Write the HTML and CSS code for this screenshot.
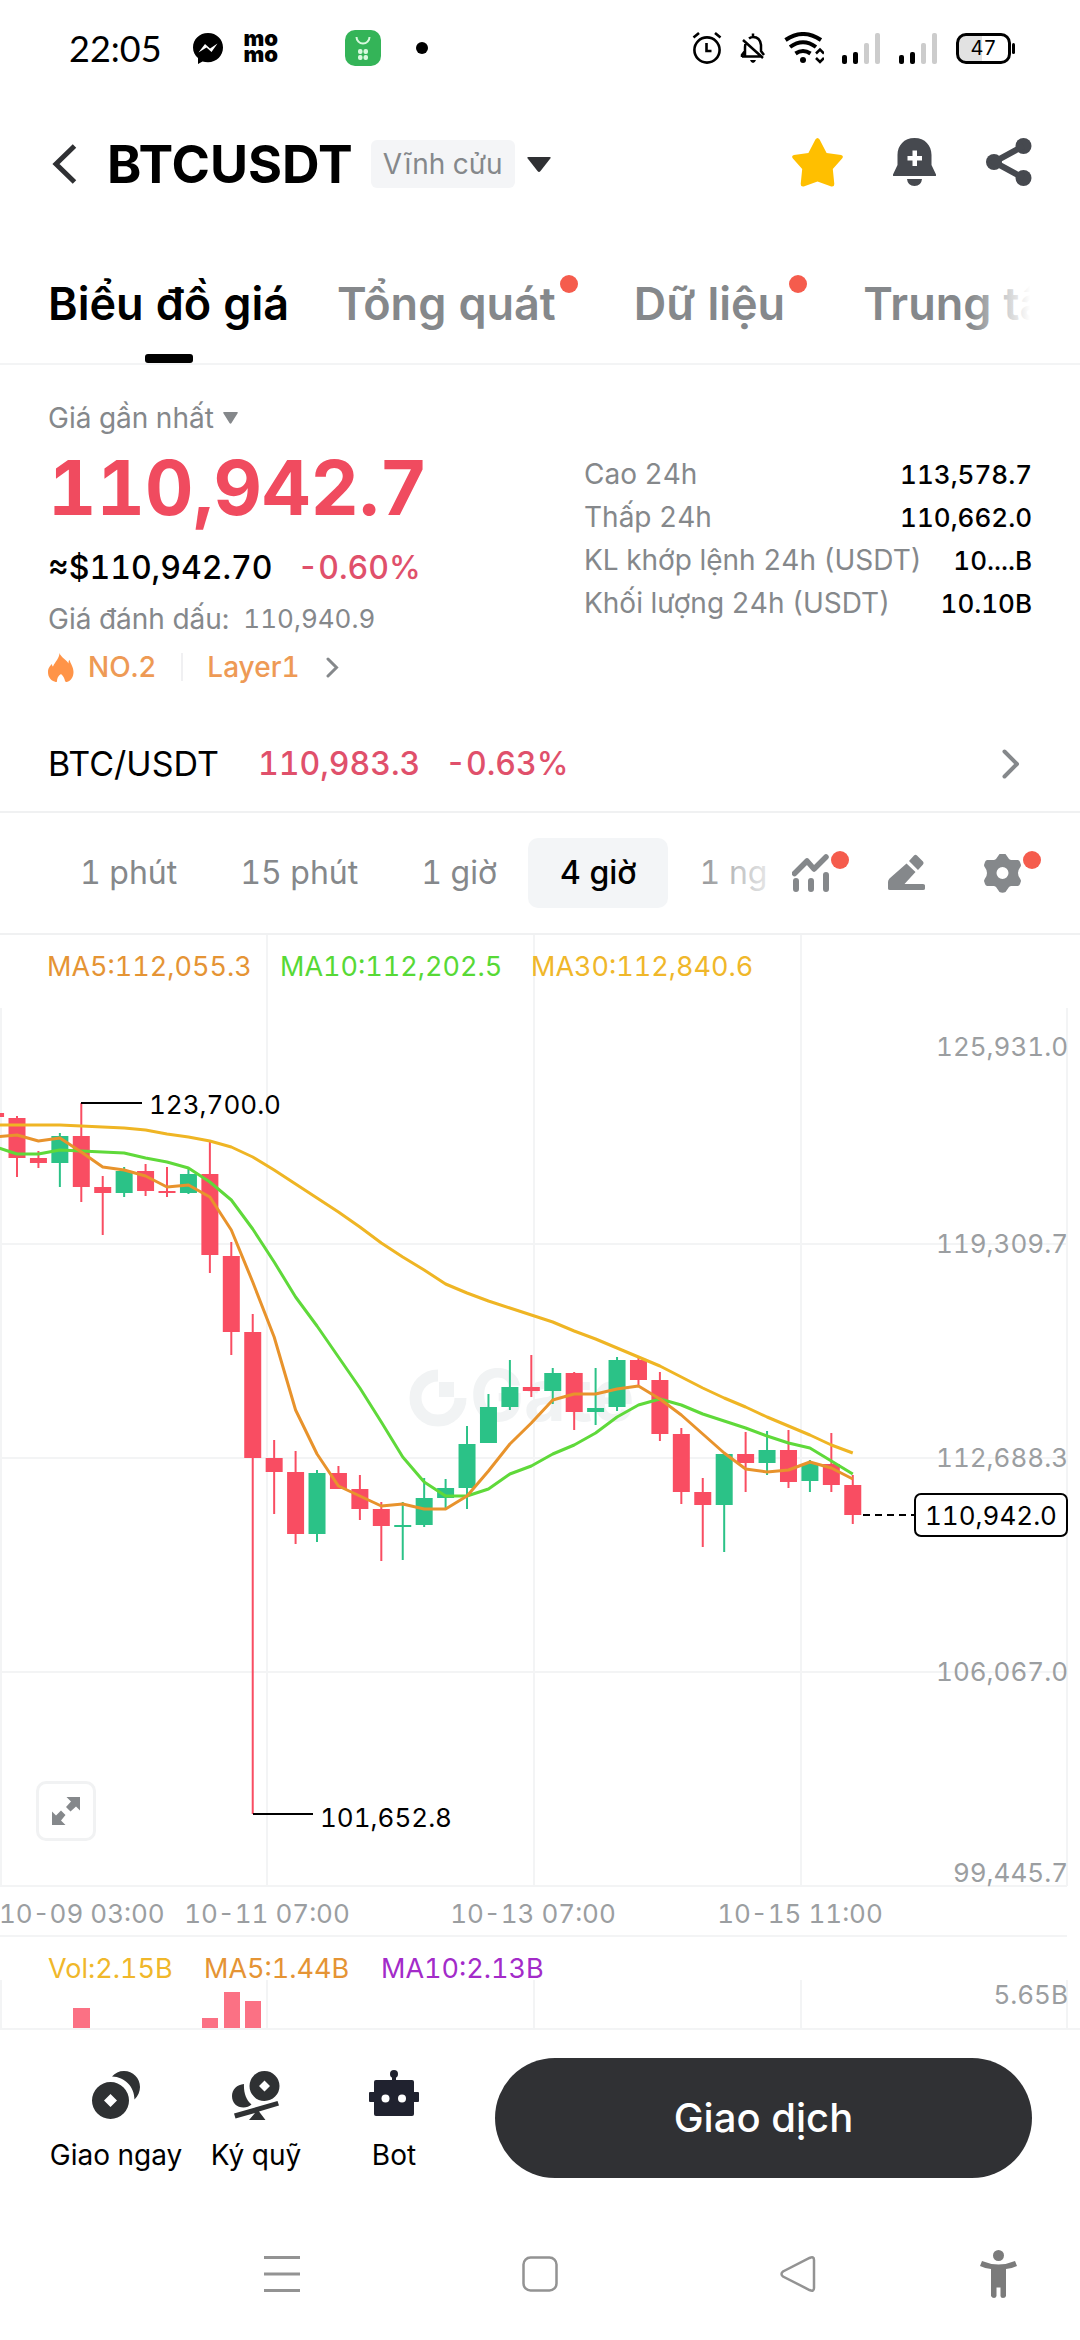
FILE: index.html
```html
<!DOCTYPE html>
<html lang="vi">
<head>
<meta charset="utf-8">
<meta name="viewport" content="width=device-width">
<title>BTCUSDT</title>
<link rel="stylesheet" href="styles.css">
</head>
<body>
<div class="status">
  <span class="clock">22:05</span>
  <svg class="messenger" width="30" height="31" viewBox="0 0 30 31"><path d="M15 0C6.500 0 0 6.300 0 14.500c0 4.600 2 8 5 10.600V31l4.500-2.500c1.700.5 3.500.8 5.500.8 8.500 0 15-6.300 15-14.700S23.500 0 15 0z"/><path d="M5.500 19.500 12 11l5 4.500 7.500-5L18.500 19l-5-4.500z" fill="#fff"/></svg>
  <span class="momo">mo<br>mo</span>
  <svg class="shop" width="36" height="36" viewBox="0 0 36 36"><rect width="36" height="36" rx="10" fill="#34b458"/><path d="M11.500 7a6.500 6.500 0 0 0 13 0" fill="none" stroke="#d9f8df" stroke-width="2"/><g fill="#d9f8df"><rect x="13" y="19" width="4.500" height="5" rx="2"/><rect x="18.500" y="19" width="4.500" height="5" rx="2"/><rect x="13" y="25" width="4.500" height="5" rx="2"/><rect x="18.500" y="25" width="4.500" height="5" rx="2"/></g></svg>
  <span class="more-dot"></span>
  <div class="status-right">
    <svg width="30" height="32" viewBox="0 0 30 32" fill="none" stroke="#000" stroke-width="2.600"><circle cx="15" cy="18" r="12.600"/><path d="M14.500 11v8h5M1.500 5.500 7 1M28.500 5.500 23 1"/></svg>
    <svg width="26" height="32" viewBox="0 0 26 32" fill="none" stroke="#000" stroke-width="2.500"><path d="M2 24.500h19M5 24V15q0-3 1.500-5M9 6.500q2-1.500 4-1.500 7 0 8 8v6l3 4M13 5V1.500M3 8l20 18M5 19l-3 4v2"/><path d="M10 28h6q-1 3-3 3t-3-3z" fill="#000" stroke="none"/></svg>
    <svg width="40" height="32" viewBox="0 0 40 32" fill="none" stroke="#000" stroke-width="4"><path d="M1.500 8Q19-4 37 8M6 15q13-9.500 26 0M11.500 21.500q7.500-5 15 0"/><circle cx="19" cy="28" r="3" fill="#000" stroke="none"/><path d="m32 21.500 4-4 4 4M32 26l4 4 4-4" stroke-width="2.500"/></svg>
    <svg width="39" height="31" viewBox="0 0 39 31"><g><rect y="22" width="5" height="9" rx="2"/><rect x="11" y="19" width="5" height="12" rx="2"/></g><g fill="#ccc"><rect x="22" y="10" width="5" height="21" rx="2"/><rect x="33" width="5" height="31" rx="2"/></g></svg>
    <svg width="39" height="31" viewBox="0 0 39 31"><g><rect y="22" width="5" height="9" rx="2"/><rect x="11" y="19" width="5" height="12" rx="2"/></g><g fill="#ccc"><rect x="22" y="10" width="5" height="21" rx="2"/><rect x="33" width="5" height="31" rx="2"/></g></svg>
    <span class="battery">47</span>
  </div>
</div>

<header class="head">
  <button class="icon-btn back" aria-label="Quay lại"><svg width="26" height="40" viewBox="0 0 26 40"><path d="M22.500 2 4 20l18.500 18" fill="none" stroke="#2f3033" stroke-width="5"/></svg></button>
  <h1>BTCUSDT</h1>
  <button class="badge">Vĩnh cửu</button>
  <svg class="caret" width="24" height="15" viewBox="0 0 24 15"><path d="M1.500 0h21q2 0 .8 1.600L13.500 14q-1.500 1.800-3 0L.7 1.600Q-.5 0 1.500 0z" fill="#2f3033"/></svg>
  <div class="head-actions">
    <button class="icon-btn" aria-label="Yêu thích"><svg width="51" height="49" viewBox="0 0 51 49"><path d="M23.400 1.500q2.100-3 4.200 0l7 13.500 14.500 2q3 .8 1 3.500L40.800 31l1.500 15q0 3-3 2.500L25.500 43.500l-13.800 5q-3 .5-3-2.500l1.500-15L.9 20.500q-2-2.700 1-3.500l14.500-2z" fill="#ffbf00"/></svg></button>
    <button class="icon-btn" aria-label="Thông báo"><svg width="43" height="48" viewBox="0 0 43 48" fill="#46494f"><path d="M21.500 0C11 0 4.500 7.500 4.500 17v10L0 36.500q-.5 1.500 1 1.500h41q1.500 0 1-1.500L38.500 27V17C38.500 7.500 32 0 21.500 0zM14 41h15q-.7 7-7.500 7T14 41z"/><path d="M19.500 12.500h4.500V18h5v4.500h-5V28h-4.500v-5.500h-5V18h5z" fill="#fff"/></svg></button>
    <button class="icon-btn" aria-label="Chia sẻ"><svg width="46" height="48" viewBox="0 0 46 48" fill="#46494f"><circle cx="8" cy="24" r="8"/><circle cx="37.500" cy="8" r="8"/><circle cx="37.500" cy="40" r="8"/><path d="M37.500 8 8 24l29.500 16" fill="none" stroke="#46494f" stroke-width="6"/></svg></button>
  </div>
</header>

<nav class="tabs">
  <button class="tab active">Biểu đồ giá</button>
  <button class="tab dot">Tổng quát</button>
  <button class="tab dot">Dữ liệu</button>
  <button class="tab">Trung tâm</button>
</nav>

<main>
<section class="summary">
  <div class="price-col">
    <button class="last-label">Giá gần nhất <svg width="15" height="12" viewBox="0 0 15 12"><path d="M1 0h13q1.500 0 .6 1.200L8.500 11q-1 1.400-2 0L.4 1.200Q-.5 0 1 0z" fill="#85888b"/></svg></button>
    <div class="last-price">110,942.7</div>
    <div class="fiat"><span>≈$110,942.70</span><span class="down">-0.60%</span></div>
    <div class="mark"><span>Giá đánh dấu:</span><span class="figure">110,940.9</span></div>
    <a class="tags" href="#layer1">
      <svg width="26" height="29" viewBox="0 0 26 29"><path d="M11.500 0c1 4 7.500 7 9 10.500 0-1.500 0-3 1-3.500 1 3.500 4 7 4 12 0 5-2.500 8.500-6 9.700-1.500.5-2 .3-2.500-.7-.5-2-1.300-5-4-7-3 2-4 4.500-4 7 0 1.300-1 1.300-2.500.6C2.500 27 0 24 0 19c0-4.500 2.500-6.500 4-8 0 1.500.5 2.500 1 2.500C7 9 11.500 5 11.500 0z" fill="#ff9448"/></svg>
      <span>NO.2</span><i></i><span>Layer1</span>
      <svg class="tag-arrow" width="13" height="21" viewBox="0 0 13 21"><path d="m2 2 8.500 8.500L2 19" fill="none" stroke="#85888b" stroke-width="3" stroke-linecap="round"/></svg>
    </a>
  </div>
  <dl class="stats">
    <div><dt>Cao 24h</dt><dd>113,578.7</dd></div>
    <div><dt>Thấp 24h</dt><dd>110,662.0</dd></div>
    <div><dt>KL khớp lệnh 24h (USDT)</dt><dd>10....B</dd></div>
    <div><dt>Khối lượng 24h (USDT)</dt><dd>10.10B</dd></div>
  </dl>
</section>

<a class="spot" href="#spot">
  <span class="pair">BTC/USDT</span><span class="down">110,983.3</span><span class="down">-0.63%</span>
  <svg width="18" height="30" viewBox="0 0 18 30"><path d="m2.500 2.500 12.500 12.500L2.500 27.500" fill="none" stroke="#85888b" stroke-width="4" stroke-linecap="round" stroke-linejoin="round"/></svg>
</a>

<div class="intervals">
  <div class="interval-list">
    <button>1 phút</button><button>15 phút</button><button>1 giờ</button><button class="active">4 giờ</button><button>1 ngày</button>
  </div>
  <div class="tools">
    <button class="icon-btn dot" aria-label="Chỉ báo"><svg width="37" height="40" viewBox="0 0 37 40" fill="none" stroke="#85888b"><path d="M2.500 20.500 15 8l7 8L34 4" stroke-width="5.500" stroke-linecap="round" stroke-linejoin="round"/><path d="M4 28v8M19 28v8M34 22v14" stroke-width="6" stroke-linecap="round"/></svg></button>
    <button class="icon-btn" aria-label="Vẽ"><svg width="37" height="40" viewBox="0 0 37 40" fill="#85888b"><path d="M18.500 10.500 27.500 19 16.500 31H35q2 0 2 1.500v3q0 1.500-2 1.500H2q-2 0-2-1.500V29q0-2 1.500-3.500zM21 8l5-5.500q1.500-1.500 3 0l6 6q1.300 1.500 0 3L30 17z"/></svg></button>
    <button class="icon-btn dot" aria-label="Cài đặt"><svg width="37" height="40" viewBox="0 0 37 40"><path fill-rule="evenodd" fill="#85888b" d="M15.500 1h6l3.500 5q1 1 2.500 1H34q1.500.5 2 2l1 3q0 1-1 2.500-2 2.500-2 5.500t2 5.500q1 1.500 1 2.500l-1 3q-.5 1.500-2 2h-6.500q-1.500 0-2.500 1l-3.500 5q-3 1.500-6 0l-3.500-5q-1-1-2.500-1H3q-1.500-.5-2-2l-1-3q0-1 1-2.500 2-2.500 2-5.500t-2-5.500Q0 13 0 12l1-3q.5-1.500 2-2h6.500q1.500 0 2.500-1zM18.500 14a6 6 0 1 0 0 12 6 6 0 0 0 0-12z"/></svg></button>
  </div>
</div>

<section class="chart">
  <svg class="plot" viewBox="0 935 1080 1095" role="img" aria-label="BTCUSDT 4 giờ">
    <g class="grid">
      <path d="M1 1008V1886M267 935V1886M534 935V1886M801 935V1886M1067 1008V1886M1 1980V2028M267 1980V2028M534 1980V2028M801 1980V2028M1067 1980V2028"/>
      <path d="M0 1244H1067M0 1458H1067M0 1672H1067M0 1886H1067M0 1936H1067M0 2029H1080"/>
    </g>
    <g class="watermark"><path d="M438 1375.500a22.500 22.500 0 1 0 22.500 22.500" fill="none" stroke-width="12"/><rect x="439" y="1382" width="15" height="15"/><text x="470" y="1421">Gate</text></g>
    <g id="candles"></g>
    <g id="averages"></g>
    <g class="volume"><path d="M73 2008h17v20H73zM202 2018h16v10h-16zM224 1992h16v36h-16zM245 2001h16v27h-16z"/></g>
    <path class="leader" d="M81 1103H142M253 1814H313"/>
    <path class="leader dashed" d="M863 1515H914"/>
    <g class="note"><text x="149" y="1114">123,700.0</text><text x="320" y="1827">101,652.8</text></g>
    <g class="axis price-axis"><text x="1068" y="1056">125,931.0</text><text x="1068" y="1253">119,309.7</text><text x="1068" y="1467">112,688.3</text><text x="1068" y="1681">106,067.0</text><text x="1068" y="1882">99,445.7</text><text x="1068" y="2004">5.65B</text></g>
    <rect class="price-box" x="915" y="1494" width="152" height="42" rx="6"/>
    <g class="note"><text x="991" y="1525" text-anchor="middle">110,942.0</text></g>
    <g class="axis"><text x="-1" y="1923">10-09 03:00</text><g text-anchor="middle"><text x="267" y="1923">10-11 07:00</text><text x="533" y="1923">10-13 07:00</text><text x="800" y="1923">10-15 11:00</text></g></g>
    <g class="legend">
      <text class="ma5" x="47" y="976">MA5:112,055.3</text><text class="ma10" x="280" y="976">MA10:112,202.5</text><text class="ma30" x="531" y="976">MA30:112,840.6</text>
      <text class="ma30" x="48" y="1978">Vol:2.15B</text><text class="ma5" x="204" y="1978">MA5:1.44B</text><text class="vol10" x="381" y="1978">MA10:2.13B</text>
    </g>
  </svg>
  <button class="expand" aria-label="Toàn màn hình"><svg width="28" height="28" viewBox="0 0 28 28" fill="#85888b"><path d="M14.500 0H28v13.500l-4-4-5.500 5-4.500-4.500 5-5.500zM0 14.500l4 4 5-5L13.500 18 9 23.500l4.500 4.500H0z"/></svg></button>
</section>
</main>

<footer class="actions">
  <div class="shortcuts">
    <a href="#spot"><svg width="48" height="50" viewBox="0 0 48 50" fill="#2f3133"><path d="M20 6.500C23 3 27 1 32 1c9 0 16 7 16 16 0 4.500-2 9-5.500 12.500C42.500 17 33 7 20 6.500z"/><path fill-rule="evenodd" d="M18.500 12a18.500 18.500 0 1 0 0 37 18.500 18.500 0 0 0 0-37zm0 12 6.500 6.500-6.500 6.500-6.500-6.500z"/></svg>Giao ngay</a>
    <a href="#margin"><svg width="48" height="50" viewBox="0 0 48 50" fill="#2f3133"><path fill-rule="evenodd" d="M32.500 1a15 15 0 1 0 0 30 15 15 0 0 0 0-30zm0 9.500L38 16l-5.500 5.500L27 16z"/><path d="M12 14C5 14.500 0 19.500 0 26c0 7 5 11.500 11.500 11.500 3 0 6-1 8-3C14 30 11.500 22 12 14zM2 43.500 45.500 31l1.500 4.500-20 6 6.500 8.500H17l6-7-19.500 5.500z"/></svg>Ký quỹ</a>
    <a href="#bot"><svg width="50" height="50" viewBox="0 0 50 50" fill="#20222f"><circle cx="25" cy="4" r="4"/><rect x="23" y="5" width="4" height="7"/><rect x="5" y="10" width="40" height="36" rx="2"/><rect y="22" width="50" height="10" rx="1"/><circle cx="16.500" cy="28.500" r="4" fill="#fff"/><circle cx="33" cy="28.500" r="4" fill="#fff"/></svg>Bot</a>
  </div>
  <button class="trade">Giao dịch</button>
</footer>

<nav class="system">
  <button class="icon-btn recent" aria-label="Gần đây"><svg width="36" height="36" viewBox="0 0 36 36"><path d="M0 1.500h36M0 18h36M0 34.500h36" stroke="#939393" stroke-width="3"/></svg></button>
  <button class="icon-btn" aria-label="Trang chủ"><svg width="36" height="36" viewBox="0 0 36 36"><rect x="1.500" y="1.500" width="33" height="33" rx="7" fill="none" stroke="#939393" stroke-width="2.500"/></svg></button>
  <button class="icon-btn" aria-label="Trở lại"><svg width="36" height="36" viewBox="0 0 36 36"><path d="M29.500 2Q34 0 34 4v28q0 4-4.500 2L3 20.500Q0 18 3 15.500z" fill="none" stroke="#939393" stroke-width="2.500"/></svg></button>
  <button class="icon-btn" aria-label="Trợ năng"><svg width="37" height="48" viewBox="0 0 37 48" fill="#7b7b7b"><circle cx="18.500" cy="5.500" r="5.500"/><path d="M2 11q16.500 7 33 0l2 5q-5 2.500-11 3v27q-.5 2-3 2t-2.500-2V37.500h-4V46q-.5 2-2.500 2t-3-2V19q-6-.5-11-3z"/></svg></button>
</nav>
<script src="chart.js"></script>
</body>
</html>
```
FILE: styles.css
```css
* { box-sizing: border-box; }
body {
  margin: 0;
  background: #fff;
  color: #000;
  font-family: Inter, "Liberation Sans", sans-serif;
  font-size: 28px;
  font-variant-numeric: tabular-nums;
}
button {
  border: 0;
  padding: 0;
  background: none;
  color: inherit;
  font: inherit;
  font-variant-numeric: inherit;
  white-space: nowrap;
}
a { color: inherit; text-decoration: none; }
svg { display: block; flex: none; }
.icon-btn { position: relative; display: flex; align-items: center; }

/* status bar */
.status { display: flex; align-items: center; height: 96px; padding: 0 69px; }
.clock { font-family: Lato, sans-serif; font-size: 36px; }
.messenger { margin-left: 31px; }
.momo { margin-left: 21px; font-size: 22px; font-weight: 900; line-height: 16px; padding-bottom: 4px; }
.shop { margin-left: 67px; }
.more-dot { width: 12px; height: 12px; margin-left: 35px; border-radius: 50%; background: #000; }
.status-right { display: flex; align-items: center; gap: 18px; margin-left: auto; }
.battery {
  position: relative;
  width: 55px;
  border: 3px solid #000;
  border-radius: 10px;
  background: linear-gradient(90deg, #e2e2e2 47%, #fff 47%);
  font-size: 20px;
  line-height: 25px;
  text-align: center;
}
.battery::after { content: ""; position: absolute; right: -7px; top: 7px; width: 3px; height: 11px; border-radius: 2px; background: #000; }

/* title row */
.head { display: flex; align-items: center; height: 136px; padding: 0 48px; }
.back { margin-left: 4px; }
h1 { margin: 0 0 0 29px; font-size: 52px; font-weight: 700; }
.badge { margin-left: 18px; padding: 0 12px; border-radius: 6px; background: #f4f5f7; color: #85888b; font-size: 28px; line-height: 48px; }
.caret { margin-left: 12px; }
.head-actions { display: flex; align-items: center; gap: 50px; margin-left: auto; padding-bottom: 4px; }

/* tabs */
.tabs {
  position: relative;
  display: flex;
  gap: 48px;
  padding: 0 48px;
  overflow: hidden;
  border-bottom: 2px solid #f3f4f5;
}
.tabs::after { content: ""; position: absolute; right: 0; top: 0; bottom: 0; width: 110px; background: linear-gradient(90deg, #fff0, #fff 55%); }
.tab { position: relative; flex: none; padding: 12px 0 0; color: #85888b; font-size: 45px; font-weight: 600; line-height: 119px; }
.tab.active { color: #000; }
.tab.active::after { content: ""; position: absolute; left: 50%; bottom: 0; width: 48px; height: 9px; margin-left: -24px; border-radius: 3px; background: #000; }
.dot::after { content: ""; position: absolute; width: 18px; height: 18px; border-radius: 50%; background: #f55c4d; }
.tab.dot { margin-right: 30px; }
.tab.dot::after { right: -22px; top: 43px; }

/* price summary */
.summary { display: flex; justify-content: space-between; padding: 33px 48px 0; }
.price-col { display: flex; flex-direction: column; align-items: flex-start; }
.last-label { display: flex; align-items: center; gap: 9px; color: #85888b; line-height: 40px; }
.last-price { color: #f04b5f; font-size: 75px; font-weight: 700; line-height: 100px; }
.fiat { display: flex; gap: 25px; font-size: 32px; font-weight: 500; line-height: 60px; }
.down { color: #e0506b; font-weight: 500; }
.mark { display: flex; gap: 14px; color: #85888b; line-height: 42px; }
.figure { font-size: 26px; }
.tags { display: flex; align-items: center; color: #ee9a55; font-weight: 500; line-height: 54px; }
.tags span { margin-left: 14px; }
.tags i { width: 2px; height: 28px; margin: 0 10px 0 25px; background: #f0f0f2; }
.tag-arrow { margin-left: 26px; }
.stats { width: 448px; margin: 55px 0 0; }
.stats div { display: flex; justify-content: space-between; line-height: 43px; }
.stats dt { color: #85888b; }
.stats dd { margin: 0; font-size: 26px; font-weight: 500; }

/* spot pair link */
.spot { display: flex; align-items: center; margin-top: 22px; padding: 0 60px 0 48px; border-bottom: 2px solid #f0f1f2; font-size: 32px; line-height: 95px; }
.spot .pair { margin-right: 14px; font-size: 34px; }
.spot .down { margin-left: 25px; }
.spot svg { margin-left: auto; }

/* chart intervals */
.intervals { display: flex; align-items: center; justify-content: space-between; height: 122px; padding: 0 59px 0 48px; border-bottom: 2px solid #f0f1f2; }
.interval-list { position: relative; display: flex; width: 720px; overflow: hidden; }
.interval-list::after { content: ""; position: absolute; right: 0; top: 0; bottom: 0; width: 80px; background: linear-gradient(90deg, #fff0, #fffc); }
.interval-list button { flex: none; padding: 0 31px 0 32px; border-radius: 10px; color: #85888b; font-size: 32px; line-height: 70px; }
.interval-list .active { background: #f3f5f7; color: #000; font-weight: 500; }
.tools { display: flex; gap: 59px; }
.tools .dot::after { right: -20px; top: -2px; }

/* chart */
.chart { position: relative; }
.plot { width: 100%; height: auto; font-size: 26px; }
.legend { font-size: 27px; }
.grid { fill: none; stroke: #f3f4f5; stroke-width: 2; }
.watermark { fill: #f1f3f4; stroke: none; font-size: 72px; font-weight: 700; }
.watermark path { stroke: #f1f3f4; }
.up { fill: #2bc287; stroke: #2bc287; }
.fall { fill: #f94d62; stroke: #f94d62; }
.wick { stroke-width: 2; }
.body { stroke: none; }
.line { fill: none; stroke-width: 3; stroke-linejoin: round; }
.line-ma5 { stroke: #e8932c; }
.line-ma10 { stroke: #5fd93a; }
.line-ma30 { stroke: #efb524; }
.volume { fill: #fb7184; }
.leader { stroke: #000; stroke-width: 2; }
.dashed { stroke-dasharray: 7 5; }
.axis { fill: #9b9ea1; }
.price-axis { text-anchor: end; }
.price-box { fill: #fff; stroke: #000; stroke-width: 2; }
.ma5 { fill: #e59434; }
.ma10 { fill: #57d936; }
.ma30 { fill: #f0b72a; }
.vol10 { fill: #a32bc9; }
.expand {
  position: absolute;
  left: 36px;
  bottom: 189px;
  display: grid;
  place-items: center;
  width: 60px;
  height: 60px;
  border: 3px solid #f1f2f3;
  border-radius: 10px;
  background: #fff;
}

/* bottom actions */
.actions { display: flex; gap: 35px; padding: 28px 48px 30px; }
.shortcuts { display: grid; grid-template-columns: 136px 144px 132px; padding-top: 12px; }
.shortcuts a { display: flex; flex-direction: column; align-items: center; gap: 17px; line-height: 36px; }
.trade { flex: 1; border-radius: 60px; background: #303134; color: #fff; font-size: 40px; font-weight: 500; line-height: 120px; }

/* system navigation */
.system { display: grid; grid-template-columns: 153fr 258fr 258fr 258fr 142fr 11fr; justify-items: center; align-items: center; height: 132px; }
.recent { grid-column-start: 2; }
```
FILE: chart.js
```js
// Each candle: direction (1 up, 0 down), body top, body bottom, wick top, wick bottom.
const candles = [
  [0,1113,1117,1113,1117],[0,1118,1158,1116,1177],[0,1158,1163,1151,1168],[1,1136,1163,1133,1187],
  [0,1136,1187,1103,1202],[0,1187,1193,1176,1235],[1,1171,1193,1167,1197],[0,1171,1191,1164,1196],
  [0,1191,1193,1167,1197],[1,1174,1193,1168,1194],[0,1174,1255,1141,1273],[0,1256,1332,1242,1355],
  [0,1332,1458,1314,1814],[0,1458,1472,1440,1514],[0,1472,1534,1451,1544],[1,1473,1534,1470,1542],
  [0,1473,1489,1466,1489],[0,1489,1509,1475,1520],[0,1509,1526,1502,1561],[1,1525,1527,1502,1560],
  [1,1498,1525,1478,1527],[1,1488,1498,1479,1510],[1,1444,1488,1426,1509],[1,1407,1443,1394,1443],
  [1,1387,1407,1360,1410],[0,1387,1391,1355,1397],[1,1373,1391,1368,1404],[0,1373,1412,1372,1430],
  [1,1408,1412,1368,1425],[1,1360,1407,1357,1411],[0,1360,1380,1357,1386],[0,1380,1434,1372,1441],
  [0,1434,1492,1428,1504],[0,1492,1505,1478,1547],[1,1454,1505,1454,1552],[0,1454,1463,1432,1492],
  [1,1450,1463,1431,1475],[0,1450,1482,1430,1488],[1,1464,1481,1460,1492],[0,1464,1485,1433,1492],
  [0,1485,1515,1475,1524]
];
const averages = {
  ma30: [1125,1125,1125,1125,1126,1127,1128,1130,1134,1137,1141,1147,1157,1170,1184,1198,1212,1227,1243,1257,1270,1284,1293,1301,1308,1315,1322,1331,1339,1348,1357,1366,1377,1388,1398,1407,1417,1426,1435,1445,1453],
  ma10: [1147,1154,1154,1150,1151,1152,1153,1158,1162,1168,1182,1200,1229,1262,1297,1326,1357,1388,1422,1457,1482,1496,1496,1489,1474,1466,1454,1445,1433,1417,1405,1399,1405,1414,1421,1428,1436,1443,1448,1461,1474],
  ma5: [1137,1135,1141,1138,1152,1167,1170,1176,1187,1185,1197,1230,1282,1337,1410,1454,1486,1496,1506,1504,1509,1509,1496,1471,1444,1423,1400,1394,1394,1389,1386,1399,1415,1434,1453,1469,1472,1470,1462,1468,1479]
};
const step = 21.43;
const x = i => 17 + (i - 1) * step;

document.getElementById("candles").innerHTML = candles.map(([up, top, bottom, high, low], i) =>
  `<g class="${up ? "up" : "fall"}"><path class="wick" d="M${x(i)} ${high}V${low}"/>` +
  `<rect class="body" x="${x(i) - 8.5}" y="${top}" width="17" height="${bottom - top}"/></g>`
).join("");

document.getElementById("averages").innerHTML = Object.entries(averages).map(([name, ys]) =>
  `<polyline class="line line-${name}" points="${ys.map((y, i) => `${x(i)},${y}`).join(" ")}"/>`
).join("");
```
